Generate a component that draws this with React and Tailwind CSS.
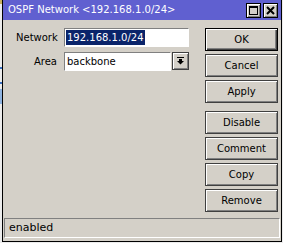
import React from 'react';

// Winbox-style "OSPF Network" dialog

const font = { fontFamily: '"DejaVu Sans", Verdana, sans-serif' };

function WinButton({ children, primary }) {
  return (
    <button
      className={
        primary
          ? 'h-[23px] w-[73px] border border-black bg-[#d4d0c8] text-[10px] text-black shadow-[inset_1px_1px_0_#fff,inset_-1px_-1px_0_#404040,inset_-2px_-2px_0_#808080]'
          : 'h-[23px] w-[73px] border border-[#404040] bg-[#d4d0c8] text-[10px] text-black shadow-[inset_1px_1px_0_#fff,inset_-1px_-1px_0_#808080]'
      }
    >
      {children}
    </button>
  );
}

function TitleButton({ children }) {
  return (
    <div className="flex h-[15px] w-[15px] items-center justify-center border border-black bg-[#d4d0c8] shadow-[inset_1px_1px_0_#fff,inset_-1px_-1px_0_#808080]">
      {children}
    </div>
  );
}

export default function App() {
  return (
    <div className="flex h-[243px] w-[283px] overflow-hidden bg-[#ececec]" style={font}>
      {/* sliver of the window behind */}
      <div className="flex w-[2px] flex-col bg-[#ececec]">
        <div className="h-[4px] bg-[#c8b060]" />
        <div className="mt-[63px] h-[2px] bg-[#3a6fc0]" />
        <div className="mt-[13px] h-[2px] bg-[#3a6fc0]" />
        <div className="mt-[5px] h-[15px] bg-[#8fb3e0]" />
      </div>

      <div className="flex h-[242px] w-[280px] flex-col border-x border-b border-black bg-[#d4d0c8]">
        {/* title bar */}
        <div className="flex h-[20px] items-center justify-between bg-[#6060d0] pl-[5px] pr-[3px]">
          <span className="text-[10px] leading-none text-white">OSPF Network &lt;192.168.1.0/24&gt;</span>
          <div className="flex gap-[2px]">
            <TitleButton>
              <svg width="9" height="9" viewBox="0 0 9 9">
                <rect x="0.5" y="0.5" width="8" height="8" fill="none" stroke="#000" />
                <rect x="0" y="0" width="9" height="2" fill="#000" />
              </svg>
            </TitleButton>
            <TitleButton>
              <svg width="9" height="9" viewBox="0 0 9 9">
                <path d="M1 1 L8 8 M8 1 L1 8" stroke="#000" strokeWidth="2" />
              </svg>
            </TitleButton>
          </div>
        </div>

        <div className="flex flex-1 gap-[16px] pl-[13px] pr-[3px] pt-[8px]">
          {/* form */}
          <div className="flex w-[173px] flex-col gap-[5px]">
            <div className="flex items-center gap-[7px]">
              <span className="w-[41px] text-right text-[10px] text-black">Network</span>
              <div className="flex h-[19px] w-[125px] items-center border border-t-[#808080] border-l-[#808080] border-b-white border-r-white bg-white pl-[1px]">
                <span className="bg-[#0a246a] px-[1px] text-[10px] leading-[15px] text-white">192.168.1.0/24</span>
              </div>
            </div>
            <div className="flex items-center gap-[7px]">
              <span className="w-[41px] text-right text-[10px] text-black">Area</span>
              <div className="flex gap-[1px]">
                <div className="flex h-[19px] w-[107px] items-center border border-t-[#808080] border-l-[#808080] border-b-white border-r-white bg-white pl-[2px]">
                  <span className="text-[10px] text-black">backbone</span>
                </div>
                <div className="flex h-[18px] w-[17px] items-center justify-center border border-[#404040] bg-[#d4d0c8] shadow-[inset_1px_1px_0_#fff,inset_-1px_-1px_0_#808080]">
                  <svg width="7" height="8" viewBox="0 0 7 8">
                    <rect x="0" y="0" width="7" height="1" fill="#000" />
                    <rect x="2" y="2" width="3" height="2" fill="#000" />
                    <polygon points="0,4 7,4 3.5,7.5" fill="#000" />
                  </svg>
                </div>
              </div>
            </div>
          </div>

          {/* buttons */}
          <div className="flex flex-col gap-[3px]">
            <WinButton primary>OK</WinButton>
            <WinButton>Cancel</WinButton>
            <WinButton>Apply</WinButton>
            <div className="h-[2px]" />
            <WinButton>Disable</WinButton>
            <WinButton>Comment</WinButton>
            <WinButton>Copy</WinButton>
            <WinButton>Remove</WinButton>
          </div>
        </div>

        {/* status bar */}
        <div className="mx-[1px] mb-[3px] flex h-[20px] items-center border border-t-[#808080] border-l-[#808080] border-b-white border-r-white pl-[4px]">
          <span className="text-[11px] text-black">enabled</span>
        </div>
      </div>
    </div>
  );
}
